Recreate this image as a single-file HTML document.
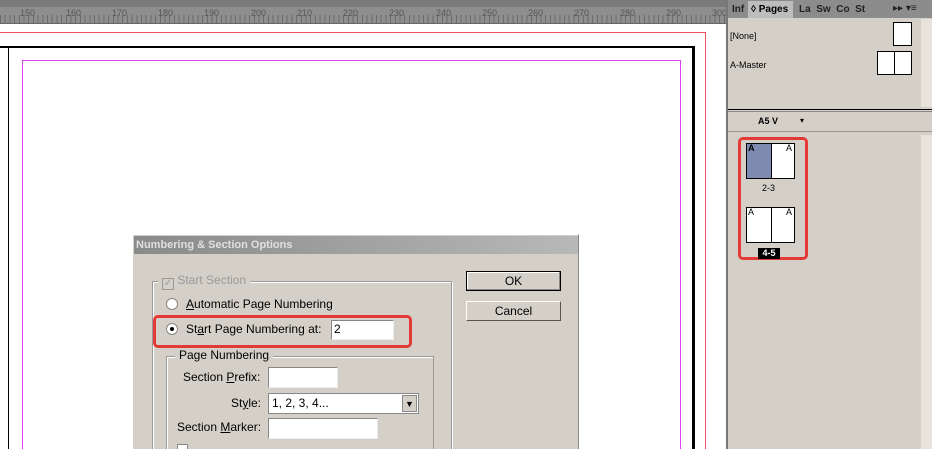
<!DOCTYPE html>
<html><head><style>
*{margin:0;padding:0;box-sizing:border-box}
html,body{width:932px;height:449px;overflow:hidden}
body{position:relative;background:#fff;font-family:"Liberation Sans",sans-serif;font-size:12px}
.a{position:absolute}
.t{font-size:9px;color:#555;position:absolute;top:8px}
</style></head><body>
<!-- ruler -->
<div class="a" style="left:0;top:0;width:727px;height:7px;background:#7a7a7a"></div>
<div class="a" style="left:0;top:7px;width:727px;height:17px;background:#8e8e8e;border-bottom:1px solid #666"></div>
<div class="a" style="left:0;top:15px;width:727px;height:8px;background:repeating-linear-gradient(90deg,#6a6a6a 0 1px,transparent 1px 4.7px)"></div>
<div class="t" style="left:20px">150</div><div class="t" style="left:66px">160</div><div class="t" style="left:112px">170</div><div class="t" style="left:158px">180</div><div class="t" style="left:204px">190</div><div class="t" style="left:251px">200</div><div class="t" style="left:297px">210</div><div class="t" style="left:343px">220</div><div class="t" style="left:389px">230</div><div class="t" style="left:436px">240</div><div class="t" style="left:482px">250</div><div class="t" style="left:528px">260</div><div class="t" style="left:574px">270</div><div class="t" style="left:620px">280</div><div class="t" style="left:666px">290</div><div class="t" style="left:712px">300</div>
<!-- canvas -->
<div class="a" style="left:0;top:32px;width:706px;height:420px;border-top:1px solid #f05060;border-right:1px solid #f05060"></div>
<div class="a" style="left:0;top:46px;width:695px;height:410px;border-top:2px solid #000;border-right:3px solid #000"></div>
<div class="a" style="left:8px;top:46px;width:1px;height:410px;background:#000"></div>
<div class="a" style="left:22px;top:60px;width:659px;height:400px;border:1px solid #e040f0;border-bottom:none"></div>
<!-- panel -->
<div class="a" style="left:726px;top:0;width:206px;height:449px;background:#d4d0c8;border-left:2px solid #777"></div>
<div class="a" style="left:728px;top:0;width:204px;height:18px;background:#8c8c8c"></div>
<div class="a" style="left:732px;top:4px;font-weight:bold;font-size:10px;color:#222">Inf</div>
<div class="a" style="left:748px;top:1px;width:45px;height:17px;background:#bdbdbd;font-weight:bold;font-size:10px;padding:3px 3px">◊ Pages</div>
<div class="a" style="left:799px;top:4px;font-weight:bold;font-size:10px;color:#222">La&nbsp;&nbsp;Sw&nbsp;&nbsp;Co&nbsp;&nbsp;St</div>
<div class="a" style="left:893px;top:3px;font-size:10px;color:#222">▸▸ ▾≡</div>
<div class="a" style="left:921px;top:19px;width:11px;height:88px;background:#e8e4dc"></div>
<div class="a" style="left:730px;top:31px;font-size:9px">[None]</div>
<div class="a" style="left:893px;top:22px;width:19px;height:24px;border:1px solid #000;background:#fff"></div>
<div class="a" style="left:730px;top:60px;font-size:9px">A-Master</div>
<div class="a" style="left:877px;top:51px;width:35px;height:24px;border:1px solid #000;background:linear-gradient(90deg,#fff 16px,#000 16px 17px,#fff 17px)"></div>
<div class="a" style="left:728px;top:109px;width:204px;height:3px;border-top:1px solid #000;border-bottom:1px solid #888"></div>
<div class="a" style="left:728px;top:113px;width:204px;height:19px;border-bottom:1px solid #999"></div>
<div class="a" style="left:758px;top:116px;font-weight:bold;font-size:9px">A5 V</div>
<div class="a" style="left:800px;top:116px;font-size:8px">▾</div>
<div class="a" style="left:921px;top:135px;width:11px;height:314px;background:#e8e4dc"></div>
<!-- spreads -->
<div class="a" style="left:738px;top:137px;width:70px;height:123px;border:3px solid #e53935;border-radius:5px"></div>
<div class="a" style="left:746px;top:143px;width:49px;height:36px;border:1px solid #000;background:linear-gradient(90deg,#7f8ab0 24px,#000 24px 25px,#fff 25px)"></div>
<div class="a" style="left:748px;top:143px;font-size:9px;font-weight:bold">A</div>
<div class="a" style="left:786px;top:143px;font-size:9px">A</div>
<div class="a" style="left:762px;top:183px;font-size:9px">2-3</div>
<div class="a" style="left:746px;top:207px;width:49px;height:36px;border:1px solid #000;background:linear-gradient(90deg,#fff 24px,#000 24px 25px,#fff 25px)"></div>
<div class="a" style="left:748px;top:207px;font-size:9px">A</div>
<div class="a" style="left:786px;top:207px;font-size:9px">A</div>
<div class="a" style="left:758px;top:248px;width:22px;height:11px;background:#000;color:#fff;font-size:9px;font-weight:bold;text-align:center">4-5</div>
<!-- dialog -->
<div class="a" style="left:132px;top:234px;width:447px;height:220px;background:#d4d0c8;border:1px solid #fff;border-right-color:#888"></div>
<div class="a" style="left:134px;top:236px;width:444px;height:18px;background:linear-gradient(90deg,#8a8a8a,#b8b8b8);color:#e0e0e0;font-weight:bold;font-size:11px;padding:3px 2px">Numbering &amp; Section Options</div>
<div class="a" style="left:152px;top:281px;width:300px;height:175px;border:1px solid #999;box-shadow:inset 1px 1px 0 #fff,1px 1px 0 #fff"></div>
<div class="a" style="left:158px;top:273px;background:#d4d0c8;padding:0 4px;color:#999;font-size:12px"><span style="display:inline-block;width:12px;height:12px;border:1px solid #999;vertical-align:-2px;font-size:10px;line-height:10px;text-align:center">✓</span> Start Section</div>
<div class="a" style="left:166px;top:298px;width:12px;height:12px;border-radius:50%;background:#fff;border:1px solid #888"></div>
<div class="a" style="left:186px;top:297px"><u>A</u>utomatic Page Numbering</div>
<div class="a" style="left:166px;top:323px;width:12px;height:12px;border-radius:50%;background:#fff;border:1px solid #888"><div class="a" style="left:3px;top:3px;width:4px;height:4px;border-radius:50%;background:#000"></div></div>
<div class="a" style="left:186px;top:322px">St<u>a</u>rt Page Numbering at:</div>
<div class="a" style="left:331px;top:320px;width:63px;height:20px;background:#fff;border:1px solid #888;border-right-color:#eee;border-bottom-color:#eee;padding:1px 2px">2</div>
<div class="a" style="left:153px;top:315px;width:259px;height:33px;border:3px solid #e53935;border-radius:5px"></div>
<div class="a" style="left:166px;top:356px;width:268px;height:100px;border:1px solid #999;box-shadow:inset 1px 1px 0 #fff"></div>
<div class="a" style="left:175px;top:348px;background:#d4d0c8;padding:0 4px">Page Numbering</div>
<div class="a" style="left:183px;top:370px">Section <u>P</u>refix:</div>
<div class="a" style="left:268px;top:367px;width:70px;height:21px;background:#fff;border:1px solid #888;border-right-color:#eee;border-bottom-color:#eee"></div>
<div class="a" style="left:231px;top:396px">St<u>y</u>le:</div>
<div class="a" style="left:268px;top:393px;width:151px;height:21px;background:#fff;border:1px solid #888;padding:2px 3px">1, 2, 3, 4...</div>
<div class="a" style="left:402px;top:395px;width:15px;height:17px;background:#d4d0c8;border:1px solid #888;font-size:9px;text-align:center;line-height:16px">▼</div>
<div class="a" style="left:177px;top:420px">Section <u>M</u>arker:</div>
<div class="a" style="left:268px;top:418px;width:110px;height:21px;background:#fff;border:1px solid #888;border-right-color:#eee;border-bottom-color:#eee"></div>
<div class="a" style="left:177px;top:444px;width:11px;height:11px;border:1px solid #888;background:#fff"></div>
<div class="a" style="left:466px;top:271px;width:95px;height:20px;border:1px solid #000;box-shadow:inset -1px -1px 0 #888,inset 1px 1px 0 #fff;text-align:center;line-height:18px">OK</div>
<div class="a" style="left:466px;top:301px;width:95px;height:20px;border:1px solid #fff;border-right-color:#555;border-bottom-color:#555;text-align:center;line-height:18px">Cancel</div>
</body></html>
